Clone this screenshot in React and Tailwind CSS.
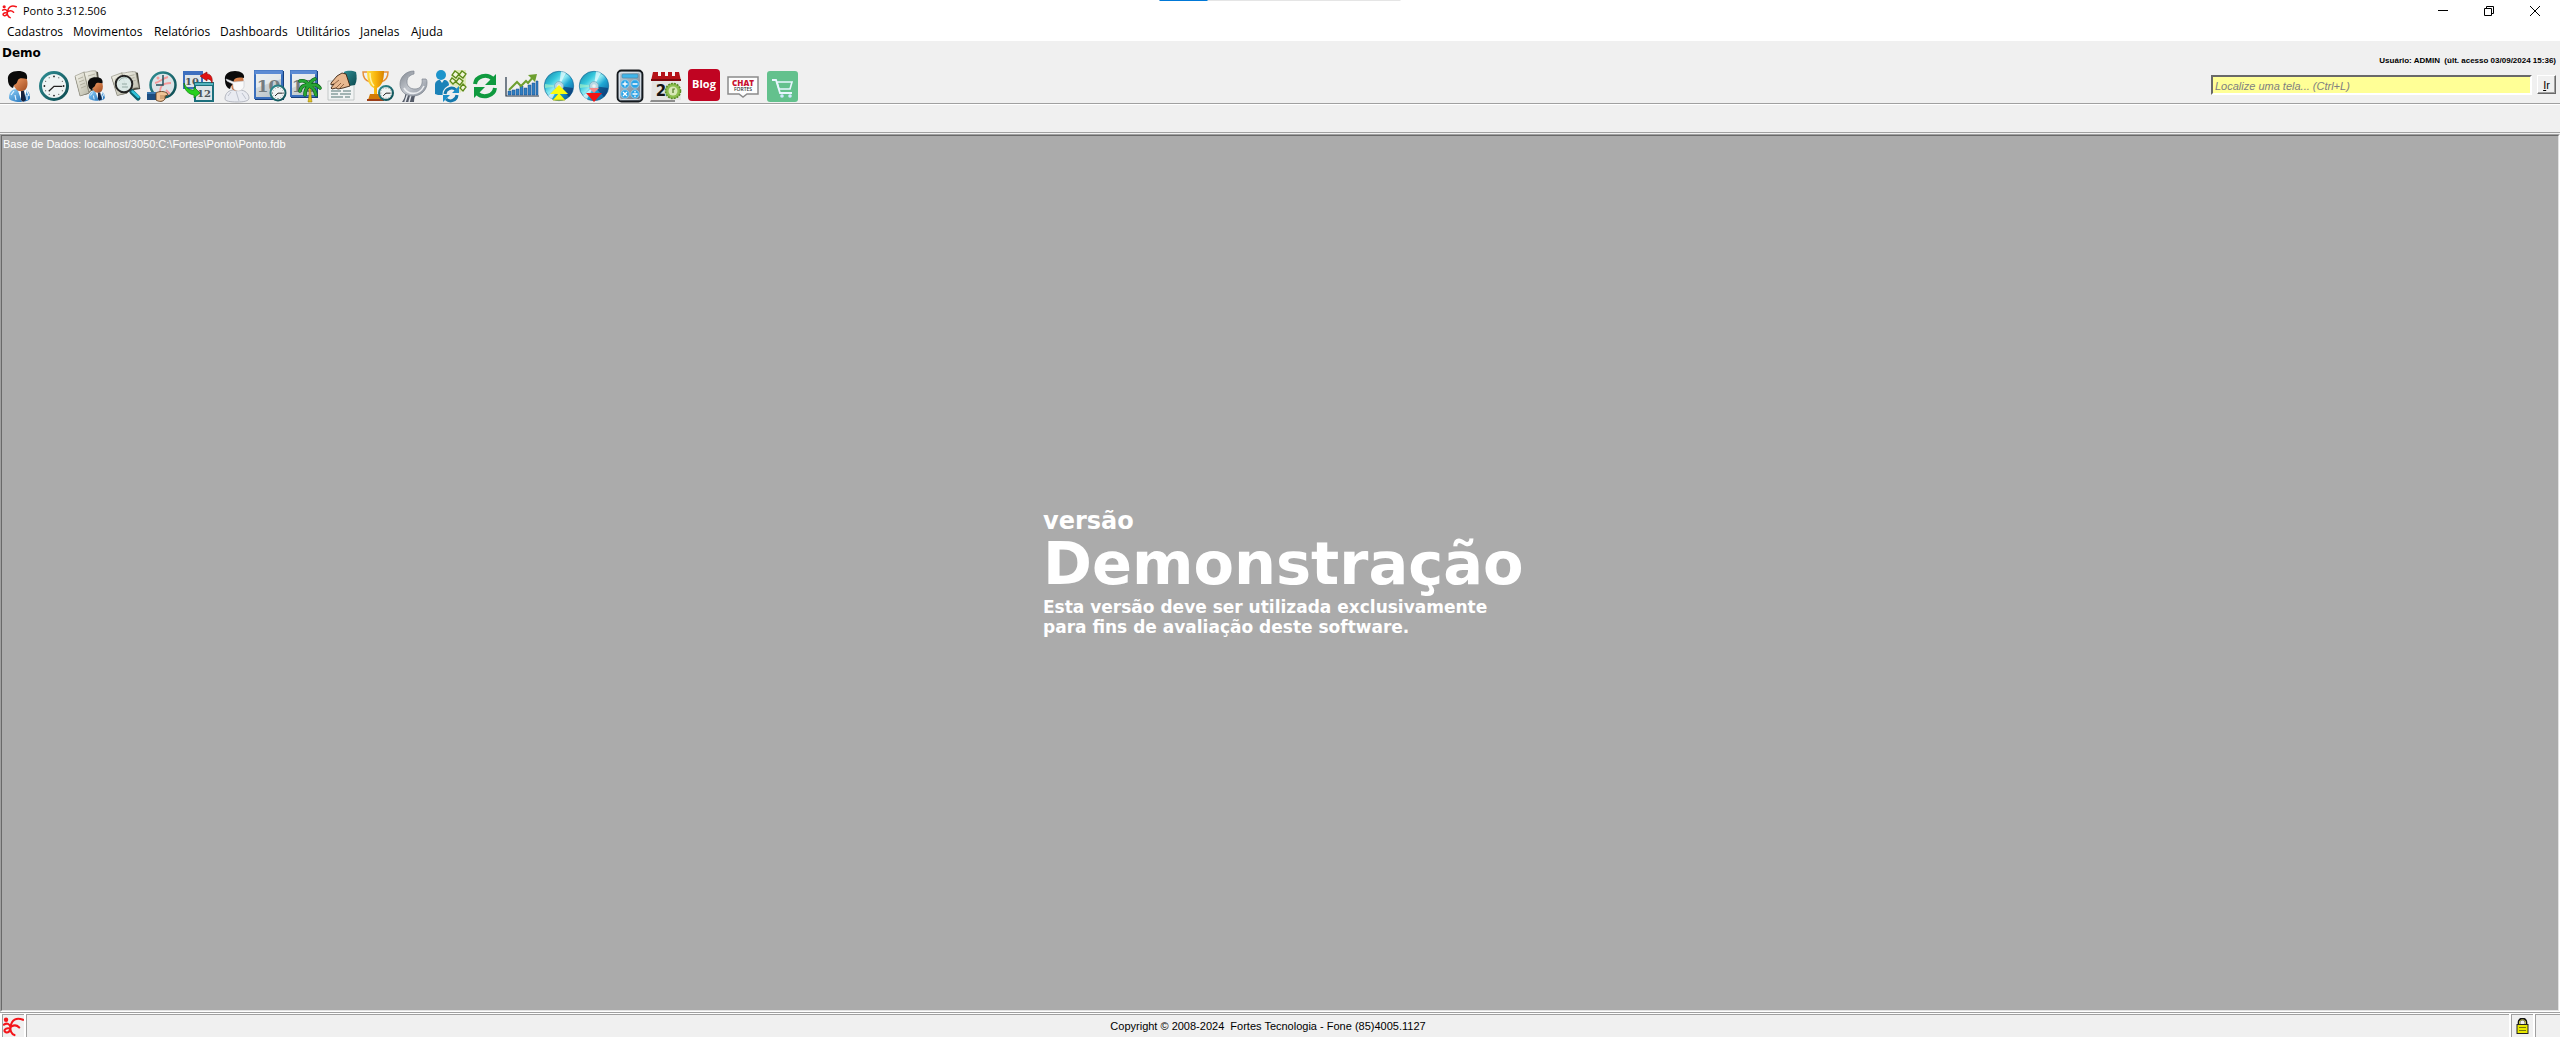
import React from "react";

const UI = "font-['Open_Sans','Noto_Sans',sans-serif]";
const SANS = "font-['Liberation_Sans',Arial,sans-serif]";

function Icon({ w = 36, children }) {
  return (
    <svg width={w} height="35" viewBox={`0 0 ${w} 35`} aria-hidden="true" className="block">
      {children}
    </svg>
  );
}

function Defs() {
  return (
    <svg width="0" height="0" className="absolute" aria-hidden="true">
      <defs>
        <linearGradient id="skin" x1="0" y1="0" x2="1" y2="1">
          <stop offset="0" stopColor="#f8a36a" />
          <stop offset="1" stopColor="#a04a1e" />
        </linearGradient>
        <linearGradient id="shirt" x1="0" y1="0" x2="1" y2="1">
          <stop offset="0" stopColor="#8fd0f8" />
          <stop offset="1" stopColor="#1668b4" />
        </linearGradient>
        <linearGradient id="teal" x1="0" y1="0" x2="1" y2="1">
          <stop offset="0" stopColor="#2f8d93" />
          <stop offset="1" stopColor="#0c4a50" />
        </linearGradient>
        <linearGradient id="page" x1="0" y1="0" x2="1" y2="1">
          <stop offset="0" stopColor="#f6f5ec" />
          <stop offset="1" stopColor="#b9b8a8" />
        </linearGradient>
        <linearGradient id="cal" x1="0" y1="0" x2="1" y2="1">
          <stop offset="0" stopColor="#dfe5e8" />
          <stop offset="1" stopColor="#b4bdc2" />
        </linearGradient>
        <linearGradient id="gold" x1="0" y1="0" x2="1" y2="0">
          <stop offset="0" stopColor="#ffe04a" />
          <stop offset="0.5" stopColor="#f9b60c" />
          <stop offset="1" stopColor="#d98200" />
        </linearGradient>
        <linearGradient id="steel" x1="0" y1="0" x2="1" y2="1">
          <stop offset="0" stopColor="#80868f" />
          <stop offset="0.5" stopColor="#c3c7ce" />
          <stop offset="1" stopColor="#868d98" />
        </linearGradient>
        <linearGradient id="disc" x1="0" y1="0" x2="1" y2="1">
          <stop offset="0" stopColor="#12779f" />
          <stop offset="0.3" stopColor="#35c8dc" />
          <stop offset="0.45" stopColor="#8fe9f2" />
          <stop offset="0.6" stopColor="#1fa8d4" />
          <stop offset="1" stopColor="#093f86" />
        </linearGradient>
        <linearGradient id="calc" x1="0" y1="0" x2="1" y2="1">
          <stop offset="0" stopColor="#c3ced8" />
          <stop offset="1" stopColor="#6b7a88" />
        </linearGradient>
      </defs>
    </svg>
  );
}

function Clock({ cx, cy, r, sw = 2.5, face = "#eef3f3" }) {
  return (
    <g>
      <circle cx={cx} cy={cy} r={r - sw / 2} fill={face} stroke="url(#teal)" strokeWidth={sw} />
      {[0, 30, 60, 90, 120, 150, 180, 210, 240, 270, 300, 330].map((a) => (
        <circle
          key={a}
          cx={cx + Math.cos((a * Math.PI) / 180) * r * 0.64}
          cy={cy + Math.sin((a * Math.PI) / 180) * r * 0.64}
          r={a % 90 === 0 ? r * 0.06 : r * 0.035}
          fill="#222"
        />
      ))}
      <path
        d={`M${cx + r * 0.55} ${cy + r * 0.02}H${cx}L${cx - r * 0.35} ${cy + r * 0.35}`}
        fill="none"
        stroke="#222"
        strokeWidth={r > 10 ? 1.3 : 1}
      />
    </g>
  );
}

function Man() {
  return (
    <g>
      <path d="M9 30c0-6 3-9 8-9h5c5 0 8 3 8 9 0 2-4 4-10 4S9 32 9 30Z" fill="url(#shirt)" />
      <path d="M11 27l3-4M27 23l2 5M16 32l-1-5M27 32v-5" stroke="#e8f5ff" strokeWidth="1.2" />
      <path d="M17 20l5 4 5-3-3 13h-2Z" fill="#fff" />
      <path d="M21 23l3 0 2 9-3 2-2-2Z" fill="#15213c" />
      <path d="M13 9h13c2 4 2 9 0 12-3 3-8 3-10 0-2-2-4-7-3-12Z" fill="url(#skin)" />
      <path d="M8 12C7 6 12 3 18 3c6 0 10 2 9 8-5-1-8-1-9 1-1 2-1 4-4 5l-1 3c-3-1-5-4-5-8Z" fill="#0a0a0a" />
    </g>
  );
}

function Book() {
  return (
    <g>
      <path d="M3 9l9-4 4 2 5-4 5 1 2 17-9 2-3 3-8 2Z" fill="#46443a" />
      <path d="M3 8l9-4 5 21-9 3Z" fill="url(#page)" stroke="#8d8b7c" strokeWidth=".6" />
      <path d="M12 4c3 1 6-2 12-1l3 17c-4-1-7 1-10 4Z" fill="url(#page)" stroke="#8d8b7c" strokeWidth=".6" />
      <path d="M6 11l5-2M7 14l5-2M8 17l5-2M9 20l5-2M16 8l7-2M17 11l6-2M18 14l6-2" stroke="#a9a797" strokeWidth=".8" />
    </g>
  );
}

function Calendar({ s = 29, n = "10" }) {
  return (
    <g>
      <rect x="3" y="3" width={s} height={s} fill="#163f7c" />
      <rect x="2" y="2" width={s} height={s} fill="#3a6fbd" />
      <rect x="2.5" y="2.5" width={s - 1} height="4" fill="#5b8bd4" />
      <rect x="4" y="6" width={s - 4} height={s - 6} fill="url(#cal)" />
      <path d={`M4 6h${s - 4}v5L4 20Z`} fill="#eef2f3" opacity=".7" />
      <text x={s / 2 + 2} y="24" textAnchor="middle" fontFamily="DejaVu Serif" fontWeight="700" fontSize="17" fill="#747c80">
        {n}
      </text>
    </g>
  );
}

function Disc({ cx }) {
  return (
    <g>
      <circle cx={cx} cy="18" r="14.7" fill="url(#disc)" stroke="#1b6c98" strokeWidth=".7" />
      <path d={`M${cx} 18L${cx + 2} 3.5A15 15 0 0 1 ${cx + 7} 5Z`} fill="#f3feff" opacity=".7" />
      <path d={`M${cx} 18L${cx - 14} 16A15 15 0 0 0 ${cx - 14} 20Z`} fill="#b4f5c4" opacity=".6" />
      <path d={`M${cx} 18L${cx - 11} 28A15 15 0 0 0 ${cx - 7} 31Z`} fill="#f2fbff" opacity=".7" />
      <path d={`M${cx} 18L${cx + 14} 20A15 15 0 0 1 ${cx + 10} 29Z`} fill="#0a2c66" opacity=".6" />
      <circle cx={cx} cy="18" r="4.5" fill="#b9d9e4" stroke="#6aa9bf" strokeWidth=".7" />
      <circle cx={cx} cy="18" r="1.8" fill="#efefef" />
    </g>
  );
}

const tools = [
  ["Empregados", 36, <Man />],
  ["Horários", 36, <Clock cx={18} cy={18} r={15} sw={3} />],
  [
    "Ficha do empregado",
    36,
    <>
      <Book />
      <g transform="translate(10 7) scale(.76)">
        <Man />
      </g>
    </>,
  ],
  [
    "Consulta",
    36,
    <>
      <g transform="translate(0 1) scale(1.15 .95)">
        <Book />
      </g>
      <circle cx="16" cy="16" r="8.3" fill="#dcebea" fillOpacity=".9" stroke="#222" strokeWidth="2" />
      <path d="M11 13c2-3 5-4 8-3M14 19h6M14 16h5" stroke="#94aaa4" fill="none" />
      <path d="M22 22l2 2" stroke="#222" strokeWidth="3" />
      <path d="M24 24l6 6" stroke="#0b5f6c" strokeWidth="5" strokeLinecap="round" />
      <path d="M24.500 23.500l6 5.500" stroke="#2fc3da" strokeWidth="2.500" strokeLinecap="round" />
    </>,
  ],
  [
    "Marcação de ponto",
    36,
    <>
      <circle cx="19" cy="17" r="12.500" fill="#dde4e7" stroke="url(#teal)" strokeWidth="2.500" />
      <path d="M11 15c5-1 8-5 13-6M16 25c0-7 2-10 11-10M22 22l4 4" stroke="#f59a9a" strokeWidth="1.800" fill="none" />
      <circle cx="14" cy="10" r="1.500" fill="#f59a9a" />
      <path d="M19 7v10h-7" stroke="#25505c" strokeWidth="1.500" fill="none" />
      <path d="M3 24h9v8H3Z" fill="#1c4d80" />
      <path d="M3 24h9v2H3Z" fill="#3b78b0" />
      <path d="M12 25c3-2 8-2 11 0l1 2-3 1v3c-2 3-6 3-9 1Z" fill="#f0c496" stroke="#5b3a1c" strokeWidth=".9" />
      <path d="M16 28h6M16 30h5" stroke="#a9774a" strokeWidth=".8" />
    </>,
  ],
  [
    "Troca de datas",
    36,
    <>
      <rect x="3" y="3" width="20" height="18" fill="#3d6fbf" />
      <rect x="5" y="7" width="16" height="12" fill="#dfe5e8" />
      <text x="12" y="17" textAnchor="middle" fontFamily="DejaVu Serif" fontWeight="700" fontSize="10" fill="#4c5358">10</text>
      <rect x="14" y="14" width="20" height="20" fill="#1b6f7c" />
      <rect x="15" y="15" width="18" height="2" fill="#55b4be" />
      <rect x="16" y="18" width="16" height="14" fill="#dfe5e8" />
      <text x="24" y="29" textAnchor="middle" fontFamily="DejaVu Serif" fontWeight="700" fontSize="10" fill="#4c5358">12</text>
      <path d="M20 8l7-4v2c4 0 6 4 5 9-1-3-2-4-5-4v2Z" fill="#e01212" stroke="#8d0707" strokeWidth=".6" />
      <path d="M4 15c2 5 5 7 10 7v-3l6 6-6 5v-3C8 26 4 22 4 15Z" fill="#27d01c" stroke="#0c7a0b" strokeWidth=".7" />
    </>,
  ],
  [
    "Atestados",
    36,
    <>
      <path d="M9 31c0-6 4-9 9-9h6c5 0 9 4 9 8 0 3-5 4-12 4S9 33 9 31Z" fill="#e9ebf1" stroke="#a6aab4" strokeWidth=".8" />
      <path d="M20 23l3 10M26 25l4 6M12 28l3-4" stroke="#b3b8c4" strokeWidth=".8" />
      <path d="M13 9h14c1 5 1 9-1 12-3 3-8 2-10 0Z" fill="url(#skin)" />
      <path d="M9 12C8 6 13 3 19 3c6 0 10 3 9 7-6-1-9 0-10 2-1 3-1 5-3 6l-1 3c-3-1-5-4-5-9Z" fill="#0a0a0a" />
      <path d="M10 11l8 3 10-1v6c-2 4-6 5-9 3-2-1-2-4-2-6l-6-3Z" fill="#fafafa" stroke="#c5c8ce" strokeWidth=".6" />
    </>,
  ],
  [
    "Escalas",
    36,
    <>
      <Calendar />
      <Clock cx={26} cy={25} r={8.5} sw={2} />
    </>,
  ],
  [
    "Férias",
    36,
    <>
      <Calendar s={27} n="12" />
      <path d="M20 18c2 5 1 10 0 16h4c-1-6-1-11-2-16Z" fill="#e0c21e" stroke="#8f7208" strokeWidth=".5" />
      <g fill="none" stroke="#0c5c1a" strokeWidth="3.6" strokeLinecap="round">
        <path d="M21 18c-1-4-5-6-9-5M21 18c-4-2-8 0-9 5M21 18c-3 2-4 5-4 9M21 18c1-4 3-6 6-7M21 18c4-2 8-2 11 2M21 18c4 1 6 4 7 9" />
      </g>
      <g fill="none" stroke="#27a533" strokeWidth="2.400" strokeLinecap="round">
        <path d="M21 18c-1-4-5-6-9-5M21 18c-4-2-8 0-9 5M21 18c-3 2-4 5-4 9M21 18c1-4 3-6 6-7M21 18c4-2 8-2 11 2M21 18c4 1 6 4 7 9" />
      </g>
    </>,
  ],
  [
    "Acordos",
    36,
    <>
      <path d="M4 13h26v19H4Z" fill="#f1f3f3" stroke="#b9bebe" strokeWidth=".8" />
      <path d="M7 23h10M19 23h8M7 26h7M16 26h11M7 29h12M21 29h5" stroke="#88a09f" strokeWidth="1.300" />
      <path d="M20 4c4-2 9-1 12 0 1 5 1 9-1 13l-6 1-5-10Z" fill="url(#teal)" />
      <path d="M18 5l4 1 4 12-7 2-5 1-2-1-4 1-1-1 3-4-3 1v-2l6-7Z" fill="#e8b890" stroke="#3d2412" strokeWidth=".9" />
      <path d="M10 16l5-4M12 20l5-5M16 20l4-4" stroke="#7d4f30" strokeWidth=".8" />
    </>,
  ],
  [
    "Bonificações",
    36,
    <>
      <path d="M8 4H3c0 6 3 9 7 10M23 4h5c0 6-3 9-7 10" fill="none" stroke="#e6903a" strokeWidth="1.500" />
      <path d="M7 3h17c0 9-2 15-7 17v7h-3v-7C9 18 7 12 7 3Z" fill="url(#gold)" />
      <path d="M10 5c0 7 1 10 4 13" stroke="#fff3a4" strokeWidth="1.500" fill="none" />
      <path d="M10 26h11l2 6H8Z" fill="#d27a06" />
      <path d="M7 31h17v2H7Z" fill="#9c3f1a" />
      <Clock cx={26} cy={25} r={8} sw={2} />
    </>,
  ],
  [
    "Configurações",
    36,
    <>
      <path d="M9 20c3 3 7 5 12 5-2 2-3 5-3 9H6c3-4 4-8 3-14Z" fill="#555b68" />
      <path d="M12 25l-3 9M15 27l-2 7" stroke="#e3e6eb" strokeWidth="1.500" />
      <path d="M18 3C10 3 4 9 4 16c0 7 5 12 13 12 8 0 14-6 14-13 0-2 0-3-1-4h-4c1 6-2 10-7 10-5 0-8-3-8-7 0-5 3-7 7-8Z" fill="url(#steel)" stroke="#7e858f" strokeWidth=".7" />
      <path d="M8 20c4 7 15 8 20-2" stroke="#eceef1" strokeWidth="1.600" fill="none" />
    </>,
  ],
  [
    "Integração com a folha",
    36,
    <>
      <circle cx="9" cy="7" r="5" fill="#1d94cb" />
      <path d="M3 26V17c0-3 2-5 5-5l2 3 2-3c3 0 5 2 5 5l-4 5v5H6Z" fill="#1b82b8" />
      <path d="M22 2h12v17l-6 6-11-10Z" fill="#dfeab8" />
      <path d="M23 3l4 3-3 4-4-3ZM30 3l4 3-3 4-4-3ZM20 10l4 3-3 3-3-3ZM27 10l4 3-3 4-4-3ZM31 16l3 3-3 4-3-3Z" stroke="#5c8a18" strokeWidth="1.300" fill="#f2f6d8" />
      <circle cx="19" cy="26" r="8.500" fill="#efefef" />
      <path d="M13 26a6.500 6.500 0 0 1 11-4M25 27a6.500 6.500 0 0 1-11 4" fill="none" stroke="#1478ac" strokeWidth="3" />
      <path d="M27 18v7h-7ZM11 34v-7h7Z" fill="#1d8fc9" />
    </>,
  ],
  [
    "Atualizar",
    36,
    <>
      <path d="M7 16c1-8 12-11 18-5" fill="none" stroke="#0f9a3f" strokeWidth="4" />
      <path d="M28 6v11H17Z" fill="#0f9a3f" />
      <path d="M27 20c-1 8-12 11-18 5" fill="none" stroke="#0f9a3f" strokeWidth="4" />
      <path d="M6 30V19h11Z" fill="#0f9a3f" />
    </>,
  ],
  [
    "Dashboards",
    36,
    <>
      <path d="M2 9v19h33" fill="none" stroke="#243447" strokeWidth="1.200" />
      <path d="M4 23h3v4H4ZM8 22h3v5H8ZM12 21h3v6h-3ZM16 18h3v9h-3ZM20 20h3v7h-3ZM24 17h3v10h-3ZM28 15h3v12h-3ZM32 13h2v14h-2Z" fill="#2f7fc2" stroke="#1e4f88" strokeWidth=".5" />
      <path d="M5 22l8-8 4 4 5-5 2 2 6-7" fill="none" stroke="#6d9f2f" strokeWidth="2" />
      <path d="M24 7l9-1-2 8Z" fill="#6d9f2f" />
    </>,
  ],
  [
    "Exportar",
    36,
    <>
      <Disc cx={19} />
      <path d="M19 17l9 9H10Z" fill="#fbfb10" />
      <path d="M19 25l6 7H13Z" fill="#fbfb10" />
      <path d="M13 32h12" stroke="#c7c60b" />
    </>,
  ],
  [
    "Importar",
    36,
    <>
      <Disc cx={18} />
      <path d="M13 20h10l-5 5Z" fill="#f58a8a" />
      <path d="M10 25h16l-8 9Z" fill="#f31414" />
    </>,
  ],
  [
    "Calculadora",
    36,
    <>
      <rect x="5.500" y="2.500" width="25" height="31" rx="4" fill="url(#calc)" stroke="#14181c" strokeWidth="1.800" />
      <rect x="7.500" y="4.500" width="21" height="27" rx="2" fill="none" stroke="#e3eaf0" strokeWidth=".8" />
      <rect x="10" y="6" width="16" height="4" rx="1" fill="#3fb5ea" stroke="#4a86a6" strokeWidth=".7" />
      {[
        [13, 16],
        [23, 16],
        [13, 26],
        [23, 26],
      ].map(([x, y]) => (
        <circle key={`${x}-${y}`} cx={x} cy={y} r="4.200" fill="#2ba3e6" stroke="#9fd8f5" strokeWidth=".7" />
      ))}
      <path d="M10.500 16h5M13 13.500v5M20.500 16h5M11 24l4 4M15 24l-4 4M20.500 26h5M23 23v1.500M23 27.500v1.500" stroke="#fff" strokeWidth="1.300" />
    </>,
  ],
  [
    "Agenda",
    36,
    <>
      <path d="M3 32h24v2H2Z" fill="#8d8d8d" />
      <path d="M4 12h28l1 20H3Z" fill="#e4e4e2" />
      <path d="M5 4h26l2 9H3Z" fill="#b51218" />
      <path d="M3 11h30v2H3Z" fill="#7c0a0e" />
      <path d="M10 3h3v5h-3ZM17 3h3v5h-3ZM24 3h3v5h-3Z" fill="#f7f4f4" />
      <text x="13" y="28" textAnchor="middle" fontFamily="DejaVu Sans" fontWeight="700" fontSize="15" fill="#151515">2</text>
      <circle cx="25" cy="23" r="7.500" fill="#8dbf4f" />
      <circle cx="25" cy="23" r="7.500" fill="none" stroke="#5b8d28" strokeWidth="1.600" strokeDasharray="2 1" />
      <circle cx="25" cy="23" r="4.500" fill="#d8e8b8" />
      <path d="M25 25v-4h2" stroke="#4f7a20" strokeWidth="1.200" fill="none" />
    </>,
  ],
  [
    "Blog",
    40,
    <>
      <rect x="4" y="1" width="32" height="32" rx="4" fill="#c00422" />
      <text x="20" y="20" textAnchor="middle" fontFamily="Open Sans" fontWeight="700" fontSize="11" fill="#fff">Blog</text>
    </>,
  ],
  [
    "Chat Fortes",
    39,
    <>
      <path d="M4 9h30v17H23l-4 3-4-3H4Z" fill="#fdfdfd" stroke="#8b8b8b" strokeWidth="1.500" />
      <text x="19" y="18" textAnchor="middle" fontFamily="Open Sans" fontWeight="800" fontSize="8" fill="#c8102e">CHAT</text>
      <text x="19" y="23" textAnchor="middle" fontFamily="Open Sans" fontWeight="600" fontSize="5" fill="#333">FORTES</text>
    </>,
  ],
  [
    "Loja",
    39,
    <>
      <rect x="4" y="3" width="31" height="31" rx="3" fill="#63c18d" />
      <path d="M9 12h4l4 13h12" fill="none" stroke="#e8f6ff" strokeWidth="1.800" />
      <path d="M14 14h15l-2 7H16Z" fill="none" stroke="#e8f6ff" strokeWidth="1.600" />
      <circle cx="19" cy="28" r="1.800" fill="#cfe6ff" />
      <circle cx="27" cy="28" r="1.800" fill="#cfe6ff" />
    </>,
  ],
];

function Logo({ size = 15 }) {
  return (
    <svg width={size} height={size} viewBox="0 0 22 22" aria-hidden="true" className="block">
      <circle cx="3.200" cy="4" r="2.300" fill="#f4151a" />
      <path
        d="M21 4C14 1 9 4 8 11c-1 4 1 8 4 9M9 11c3-2 6-1 8 1M1 9c3-2 6-1 7 3 0 4-3 6-5 5-3-1-1-5 4-4"
        fill="none"
        stroke="#f4151a"
        strokeWidth="2.200"
        strokeLinecap="round"
      />
    </svg>
  );
}

const menus = [
  ["Cadastros", "w-[66px]"],
  ["Movimentos", "w-[81px]"],
  ["Relatórios", "w-[66px]"],
  ["Dashboards", "w-[76px]"],
  ["Utilitários", "w-[64px]"],
  ["Janelas", "w-[51px]"],
  ["Ajuda", "w-[46px]"],
];

const windowButton = "flex h-5 w-[46px] items-center justify-center";

function TitleBar() {
  return (
    <header className="relative flex h-[22px] items-center justify-between bg-white">
      <div className="flex items-center gap-[6px] pl-[2px]">
        <Logo size={15} />
        <h1 className={`${UI} text-[11px] leading-4 text-black`}>Ponto 3.312.506</h1>
      </div>
      <div className="absolute top-0 left-1/2 flex h-px w-[241px] -translate-x-1/2 bg-[#e5e5e5]">
        <div className="w-12 bg-[#0078d7]" />
      </div>
      <div className="flex pr-[2px]">
        <button type="button" aria-label="Minimizar" className={windowButton}>
          <svg width="10" height="10" viewBox="0 0 10 10"><path d="M0 4.500h10" stroke="#000" /></svg>
        </button>
        <button type="button" aria-label="Restaurar" className={windowButton}>
          <svg width="10" height="10" viewBox="0 0 10 10"><path d="M.5 2.500h7v7h-7ZM2.500 2V.5h7v7H8" fill="none" stroke="#000" /></svg>
        </button>
        <button type="button" aria-label="Fechar" className={windowButton}>
          <svg width="10" height="10" viewBox="0 0 10 10"><path d="M0 0l10 10M10 0L0 10" stroke="#000" /></svg>
        </button>
      </div>
    </header>
  );
}

export default function App() {
  return (
    <div className="flex h-screen flex-col overflow-hidden bg-[#f0f0f0] text-black">
      <Defs />
      <TitleBar />
      <nav className={`${UI} flex h-[19px] items-center bg-white pt-px text-[12px] leading-4`}>
        {menus.map(([m, w]) => (
          <button key={m} type="button" className={`${w} shrink-0 pl-[7px] text-left whitespace-nowrap`}>
            {m}
          </button>
        ))}
      </nav>

      <section className="flex h-[62px] items-stretch justify-between">
        <div className="flex flex-col justify-between">
          <h2 className="pt-1 pl-[2px] font-['DejaVu_Sans',Verdana,sans-serif] text-[12px] leading-4 font-bold">Demo</h2>
          <div className="flex">
            {tools.map(([label, w, art]) => (
              <button key={label} type="button" title={label} aria-label={label} className="block">
                <Icon w={w}>{art}</Icon>
              </button>
            ))}
          </div>
        </div>
        <div className="flex flex-col items-end gap-1 pt-[10px] pr-1">
          <p className={`${SANS} text-[8px] leading-5 font-bold whitespace-pre`}>Usuário: ADMIN  (últ. acesso 03/09/2024 15:36)</p>
          <form className="flex items-start gap-[5px]" onSubmit={(e) => e.preventDefault()}>
            <input
              type="text"
              aria-label="Localize uma tela"
              placeholder="Localize uma tela... (Ctrl+L)"
              className={`${SANS} h-5 w-[321px] border-2 border-t-[#696969] border-r-white border-b-white border-l-[#696969] bg-[#ffff96] px-[2px] pt-px text-[11px] italic outline-none placeholder:text-[#808080]`}
            />
            <button
              type="submit"
              className={`${SANS} h-[19px] w-[19px] border border-t-white border-r-[#696969] border-b-[#696969] border-l-white bg-[#f0f0f0] text-[11px] leading-4 shadow-[inset_-1px_-1px_0_#a0a0a0]`}
            >
              <span className="underline">I</span>r
            </button>
          </form>
        </div>
      </section>

      <div className="h-[30px] shrink-0 border-t border-b border-[#a0a0a0] shadow-[inset_0_1px_0_#fff]" />

      <main className="mt-px flex min-h-0 flex-1 border border-t-[#a0a0a0] border-r-white border-b-white border-l-[#a0a0a0]">
        <div className="grid flex-1 grid-rows-[1fr_auto_1fr] border border-t-[#696969] border-r-[#e3e3e3] border-b-[#e3e3e3] border-l-[#696969] bg-[#ababab] text-white">
          <p className={`${SANS} pl-px text-[11px] leading-4`}>Base de Dados: localhost/3050:C:\Fortes\Ponto\Ponto.fdb</p>
          <div className="w-[474px] justify-self-center pb-[2px] font-['DejaVu_Sans',Verdana,sans-serif] font-bold">
            <p className="text-[24px] leading-7">versão</p>
            <p className="pb-1 text-[59px] leading-[58px]">Demonstração</p>
            <p className="text-[17px] leading-5 whitespace-nowrap">
              Esta versão deve ser utilizada exclusivamente
              <br />
              para fins de avaliação deste software.
            </p>
          </div>
        </div>
      </main>

      <footer className="flex h-[25px] shrink-0 flex-col border-t border-[#a0a0a0] bg-white pt-px">
        <div className="flex flex-1 gap-[2px] bg-white pl-[2px]">
          <div className="flex w-[22px] items-center justify-center border-t border-l border-[#a0a0a0] bg-[#f0f0f0]">
            <Logo size={21} />
          </div>
          <p className={`${SANS} flex flex-1 items-center justify-center border-t border-l border-[#a0a0a0] bg-[#f0f0f0] text-[11px] whitespace-pre`}>
            Copyright © 2008-2024  Fortes Tecnologia - Fone (85)4005.1127
          </p>
          <div className="flex w-[22px] items-center justify-center border-t border-l border-[#a0a0a0] bg-[#f0f0f0]">
            <svg width="13" height="16" viewBox="0 0 13 16" aria-label="Bloqueado" role="img">
              <path d="M3 7V4c0-4 7-4 7 0v3" fill="none" stroke="#111" strokeWidth="2.600" />
              <path d="M3.500 7V4c0-3 6-3 6 0v3" fill="none" stroke="#c9c94a" strokeWidth="1" />
              <rect x="1" y="6.500" width="11" height="9" fill="#e8e800" stroke="#222" />
              <path d="M3 9.500h7M3 12.500h7" stroke="#77770a" />
            </svg>
          </div>
          <div className="w-[25px] border-t border-l border-[#a0a0a0] bg-[#f0f0f0]" />
        </div>
      </footer>
    </div>
  );
}
